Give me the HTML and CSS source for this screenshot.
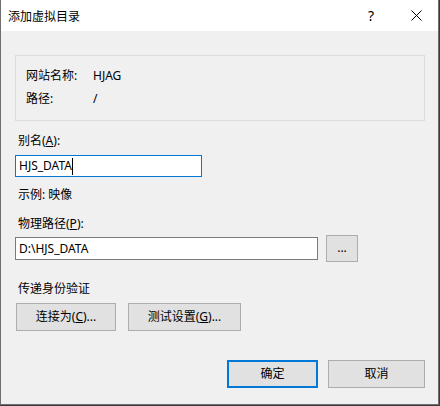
FILE: index.html
```html
<!DOCTYPE html>
<html lang="zh-CN">
<head>
<meta charset="utf-8">
<title>添加虚拟目录</title>
<link rel="stylesheet" href="styles.css">
</head>
<body>
<div class="window">
  <div class="titlebar">
    <span class="title">添加虚拟目录</span>
    <span class="help">?</span>
    <svg class="close" width="11" height="11" viewBox="0 0 11 11"><path d="M0.5 0.5 L10.5 10.5 M10.5 0.5 L0.5 10.5" stroke="#000" stroke-width="1" fill="none"/></svg>
  </div>
  <div class="content">
    <div class="groupbox">
      <div class="info">
        <span>网站名称:</span><span>HJAG</span>
        <span>路径:</span><span>/</span>
      </div>
    </div>
    <div class="label lbl-alias">别名(<u>A</u>):</div>
    <div class="textbox focused alias"><span class="val">HJS_DATA</span><span class="caret"></span></div>
    <div class="label lbl-example">示例: 映像</div>
    <div class="label lbl-path">物理路径(<u>P</u>):</div>
    <div class="path-row">
      <div class="textbox path"><span class="val">D:\HJS_DATA</span></div>
      <div class="btn browse">...</div>
    </div>
    <div class="label lbl-auth">传递身份验证</div>
    <div class="auth-row">
      <div class="btn connect">连接为(<u>C</u>)...</div>
      <div class="btn test">测试设置(<u>G</u>)...</div>
    </div>
    <div class="footer">
      <div class="btn ok">确定</div>
      <div class="btn cancel">取消</div>
    </div>
  </div>
</div>
</body>
</html>
```

FILE: styles.css
```css
html, body {
  margin: 0;
  padding: 0;
  background: #3b3b3b;
}
body {
  font-family: "Noto Sans", "Noto Sans CJK SC", sans-serif;
  font-size: 12px;
  color: #000;
}
.window {
  width: 439px;
  height: 405px;
  box-sizing: border-box;
  background: #f0f0f0;
  border-left: 1px solid #6e6e6e;
  border-right: 1px solid #6e6e6e;
  border-bottom: 1px solid #6e6e6e;
  display: flex;
  flex-direction: column;
}
.titlebar {
  height: 31px;
  background: #fff;
  display: flex;
  align-items: center;
  padding-left: 7px;
  flex-shrink: 0;
}
.title {
  font-family: "Noto Sans CJK SC", sans-serif;
  font-size: 12px;
  line-height: 16px;
  flex: 1;
  margin-top: 1px;
}
.help {
  font-family: "Noto Sans", sans-serif;
  font-size: 14px;
  line-height: 16px;
  margin-right: 37px;
}
.close {
  margin-right: 16px;
  margin-top: -1px;
}
.content {
  padding: 24px 13px 0 14px;
  display: flex;
  flex-direction: column;
  align-items: flex-start;
}
.groupbox {
  width: 410px;
  height: 66px;
  box-sizing: border-box;
  border: 1px solid #dcdcdc;
  padding: 12px 0 0 10px;
}
.info {
  display: grid;
  grid-template-columns: 67px auto;
  row-gap: 7px;
  line-height: 16px;
}
.label {
  line-height: 16px;
  padding-left: 3px;
}
.lbl-alias { margin-top: 12px; }
.lbl-example { margin-top: 10px; }
.lbl-path { margin-top: 13px; }
.lbl-auth { margin-top: 19px; }
.textbox {
  box-sizing: border-box;
  height: 22px;
  background: #fff;
  border: 1px solid #7a7a7a;
  display: flex;
  align-items: center;
  padding-left: 3px;
  line-height: 16px;
}
.textbox.focused {
  border-color: #0078d7;
}
.alias {
  width: 187px;
  margin-top: 6px;
}
.caret {
  display: inline-block;
  width: 1px;
  height: 17px;
  background: #000;
  margin-left: 0;
}
.path-row {
  display: flex;
  align-items: center;
  margin-top: 3px;
  height: 27px;
}
.path {
  width: 303px;
  height: 23px;
}
.btn {
  box-sizing: border-box;
  background: #e1e1e1;
  border: 1px solid #adadad;
  display: flex;
  align-items: center;
  justify-content: center;
  line-height: 16px;
}
.browse {
  width: 32px;
  height: 27px;
  margin-left: 8px;
  padding-bottom: 2px;
}
.auth-row {
  display: flex;
  gap: 12px;
  margin-top: 6px;
  padding-left: 1px;
}
.connect {
  width: 100px;
  height: 28px;
}
.test {
  width: 113px;
  height: 28px;
}
.footer {
  align-self: stretch;
  display: flex;
  justify-content: flex-end;
  gap: 10px;
  margin-top: 29px;
}
.ok {
  width: 91px;
  height: 28px;
  border: 2px solid #0078d7;
}
.cancel {
  width: 97px;
  height: 28px;
}
```
